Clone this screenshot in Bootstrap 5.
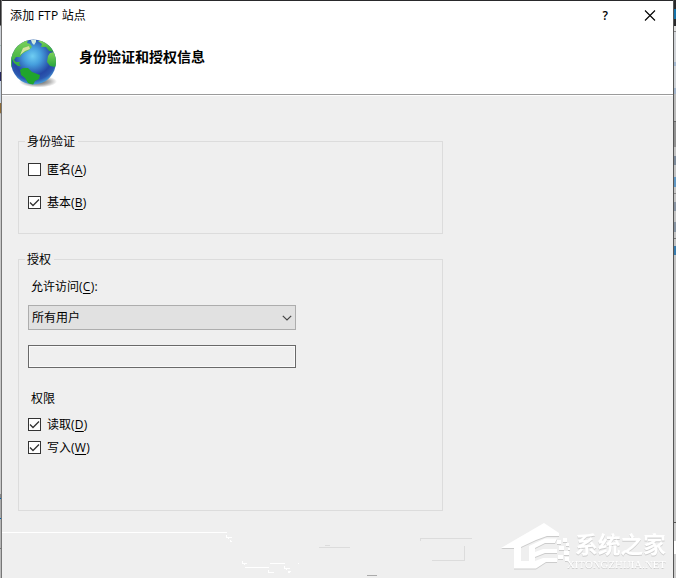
<!DOCTYPE html>
<html lang="zh-CN">
<head>
<meta charset="utf-8">
<meta name="viewport" content="width=device-width, initial-scale=1">
<title>添加 FTP 站点</title>
<link href="https://cdn.jsdelivr.net/npm/bootstrap@5.3.0/dist/css/bootstrap.min.css" rel="stylesheet">
<style>
body{width:676px;height:578px;overflow:hidden;background:#efefef;color:#000;font:12px/16px "Open Sans","Noto Sans CJK SC",sans-serif}
.edge{flex:0 0 2px;height:578px}
.edge-left{background:linear-gradient(#29292b 25px,#777 25px 26px,#ccd0d6 26px 45px,#a1b8b3 45px 46px,#c5cdd8 46px 72px,#24245c 72px 81px,#c6d2e0 81px 103px,#8d6b36 103px 113px,#aaa 113px 114px,#c8c8c8 114px 494px,#888 494px 498px,#0063b1 498px 499px,#aaa 499px 518px,#0063b1 518px 519px,#b5b5b5 519px 548px,#777 548px 549px,#bbb 549px);border-right:1px solid #777}
.edge-right{flex-basis:3px;border-left:1px solid #555;background:linear-gradient(#29292b 9px,#1673aa 9px 19px,#29292b 19px 26px,#ddd 26px 31px,#888 31px 32px,#d0d3d7 32px 62px,#a3b8d0 62px 66px,#d0d3d7 66px 88px,#a3b4ca 88px 94px,#bbb 94px 121px,#666 121px 122px,#929292 122px 147px,#c4c4c4 147px 156px,#7d8a9a 156px 165px,#c4c4c4 165px 177px,#6198c4 177px 187px,#c4c4c4 187px 193px,#888 193px 194px,#c4c4c4 194px 202px,#8994a3 202px 211px,#c4c4c4 211px 222px,#8794a3 222px 232px,#c4c4c4 232px 238px,#777 238px 239px,#c4c4c4 239px 246px,#387cae 246px 255px,#c4c4c4 255px 522px,#555 522px 523px,#ccc 523px 541px,#fff 541px 554px,#ccc 554px)}
.dialog{width:671px;height:578px;border-top:1px solid #29292b}
.masthead{height:94px;background:#fff;border-bottom:1px solid #9b9b9b;box-shadow:0 1px #fff}
.caption{height:29px;padding:0 17px 0 8px}
.caption-text{letter-spacing:.2px}
.help{font:600 12px/16px "Open Sans",sans-serif;margin-right:36px}
.title-row{padding-left:6px;gap:19px}
.heading{font:bold 14px/20px "Noto Sans CJK SC",sans-serif;margin-top:16px}
.group{width:425px;margin-left:16px;border:1px solid #dcdcdc;padding-left:9px}
.group-name{background:#efefef;margin:-8px 0 0 -3px;padding:0 3px 0 2px;height:16px}
.group-auth{height:93px;margin-top:46px}
.group-rules{height:252px;margin-top:25px}
.option{height:16px;gap:6px;width:max-content}
.key{letter-spacing:.25px}
.tick{width:13px;height:13px;flex:none;background:#fff;border:1px solid #333;margin-bottom:2px}
.tick svg{display:block}
.choice{width:268px;height:25px;border:1px solid #adadad;background:#e1e1e1;padding:0 3px;margin-top:10px}
.entry{width:268px;height:23px;border:1px solid #696969;background:#efefef;box-shadow:inset 0 0 0 1px #fafafa;margin-top:15px;padding:0}
.gap-a{margin-top:12px}.gap-b{margin-top:17px}.gap-c{margin-top:10px}.gap-d{margin-top:7px}
.label-access{margin:11px 0 0 3px}
.label-rights{margin:23px 0 0 3px}
u{text-underline-offset:2px;text-decoration-thickness:1px}
.overlay{left:0;top:510px;pointer-events:none}
.watermark{filter:drop-shadow(.5px 1px .7px #ccc)}
</style>
<script src="https://cdn.jsdelivr.net/npm/bootstrap@5.3.0/dist/js/bootstrap.bundle.min.js"></script>
</head>
<body class="d-flex position-relative">
<div class="edge edge-left"></div>
<main class="dialog flex-shrink-0">
  <header class="masthead">
    <div class="caption d-flex align-items-center">
      <span class="caption-text me-auto">添加 FTP 站点</span>
      <span class="help">?</span>
      <svg width="12" height="12" viewBox="0 0 12 12" stroke="#000" stroke-width="1.1"><path d="M1 .5l10 10M11 .5L1 10.500"/></svg>
    </div>
    <div class="title-row d-flex">
      <svg width="52" height="58" viewBox="8 29 52 58">
        <defs>
          <radialGradient id="sea" cx=".48" cy=".37" r=".63"><stop offset="0" stop-color="#6fcdf2"/><stop offset=".3" stop-color="#469fdd"/><stop offset=".68" stop-color="#2548a5"/><stop offset=".85" stop-color="#2c58b0"/><stop offset="1" stop-color="#4aa0dc"/></radialGradient>
          <linearGradient id="land" x1="0" y1="0" x2="0" y2="1"><stop offset="0" stop-color="#7fd35a"/><stop offset="1" stop-color="#27a43c"/></linearGradient>
          <radialGradient id="shade"><stop offset="0" stop-color="#444"/><stop offset=".6" stop-color="#777" stop-opacity=".6"/><stop offset="1" stop-color="#777" stop-opacity="0"/></radialGradient>
          <clipPath id="ball"><circle cx="33.500" cy="61" r="22.500"/></clipPath>
        </defs>
        <ellipse cx="38" cy="80.500" rx="19" ry="6" fill="url(#shade)"/>
        <circle cx="33.500" cy="61" r="22.500" fill="url(#sea)"/>
        <g clip-path="url(#ball)" fill="url(#land)">
          <path d="M10 64L10 46L20 38L28 39L27 42L30 43L32 46L29 49L25 51L22 53L20 56L16 56L14 59L16 61L20 61L19 63L21 65L18 65L14 62L12 58L12 69Z"/>
          <path d="M20 69L23 67L28 67L32 71L40 74L39 78L35 80L33 84L28 82L25 77L21 74Z" fill="#20a52c"/>
          <path d="M50 52L54 51L58 61L55 66L50 65L47 61L48 55Z"/>
          <path d="M38 40L45 40L52 47L54 51L49 50L46 46L41 46L42 43Z"/>
          <path d="M23 47L29 45L30 48L25 50L20 54Z" fill="#d3e29b"/>
          <path d="M31 39l5-1 0 3-2 3-2-2z" fill="#d0ebe0"/>
        </g>
      </svg>
      <div class="heading">身份验证和授权信息</div>
    </div>
  </header>

  <section class="group group-auth d-flex flex-column align-items-start">
    <div class="group-name">身份验证</div>
    <div class="option d-flex align-items-center gap-a"><span class="tick"></span><span>匿名<span class="key">(<u>A</u>)</span></span></div>
    <div class="option d-flex align-items-center gap-b"><span class="tick"><svg width="11" height="11" fill="none" stroke="#333" stroke-width="1.300"><path d="M1 5.500l3 3L10 2.500"/></svg></span><span>基本<span class="key">(<u>B</u>)</span></span></div>
  </section>

  <section class="group group-rules d-flex flex-column align-items-start">
    <div class="group-name">授权</div>
    <div class="label-access">允许访问<span class="key">(<u>C</u>):</span></div>
    <div class="choice d-flex align-items-center justify-content-between"><span>所有用户</span><svg width="10" height="6" fill="none" stroke="#444" stroke-width="1.200"><path d="M.8.8L5 5l4.200-4.200"/></svg></div>
    <input class="entry" type="text" disabled aria-label="用户">
    <div class="label-rights">权限</div>
    <div class="option d-flex align-items-center gap-c"><span class="tick"><svg width="11" height="11" fill="none" stroke="#333" stroke-width="1.300"><path d="M1 5.500l3 3L10 2.500"/></svg></span><span>读取<span class="key">(<u>D</u>)</span></span></div>
    <div class="option d-flex align-items-center gap-d"><span class="tick"><svg width="11" height="11" fill="none" stroke="#333" stroke-width="1.300"><path d="M1 5.500l3 3L10 2.500"/></svg></span><span>写入<span class="key">(<u>W</u>)</span></span></div>
  </section>
</main>
<div class="edge edge-right"></div>

<svg class="overlay position-absolute" width="676" height="68" viewBox="0 510 676 68">
  <!-- stray line fragments under the groups -->
  <g fill="none" stroke="#fff" shape-rendering="crispEdges">
    <path d="M2 532.500H227M226.500 535v3M226 537.500h6M228 538.500h1M230.500 540v2M230 541.500h2M242.500 561v3M242 563.500h5M244 564.500h1M270 563.500h15M298 563.500h1M245 567.500h24M268.500 570v3M268 572.500h6M284.500 566v3M284 568.500h6M286 569.500h1M288 571.500h3M288 572.500h2"/>
    <path stroke="#dcdcdc" d="M325 545.500h5M319 547.500h31M420 538.500h52M420.500 539v2M464.500 546v14M432 560.500h33"/>
    <path stroke="#aaa" d="M367 575.500h10"/>
  </g>
  <!-- watermark -->
  <g class="watermark" fill="#fff">
    <path d="M501 548L544 523L559 533V536H547L536 540L521 547V561H529V568.500H514V548Z"/>
    <path d="M529 546L545 538.500H557L555 543H545L535 548V552L543 549H557V553H545L535 557V561L543 558H557V562H546L536 568.500H529Z"/>
    <path d="M557 540h4v4h-4zM563 538h4v4h-4zM559 546h5v4h-5zM566 543h3v3h-3zM564 551h5v4h-5zM558 555h5v4h-5zM568 548h2v2h-2zM565 557h4v4h-4z"/>
    <text x="575" y="553" font-family="Noto Sans CJK SC" font-size="23" font-weight="700" textLength="91">系统之家</text>
    <text x="567" y="568" font-family="Liberation Serif" font-size="9.500" textLength="99" lengthAdjust="spacingAndGlyphs">XITONGZHIJIA.NET</text>
  </g>
</svg>
</body>
</html>
